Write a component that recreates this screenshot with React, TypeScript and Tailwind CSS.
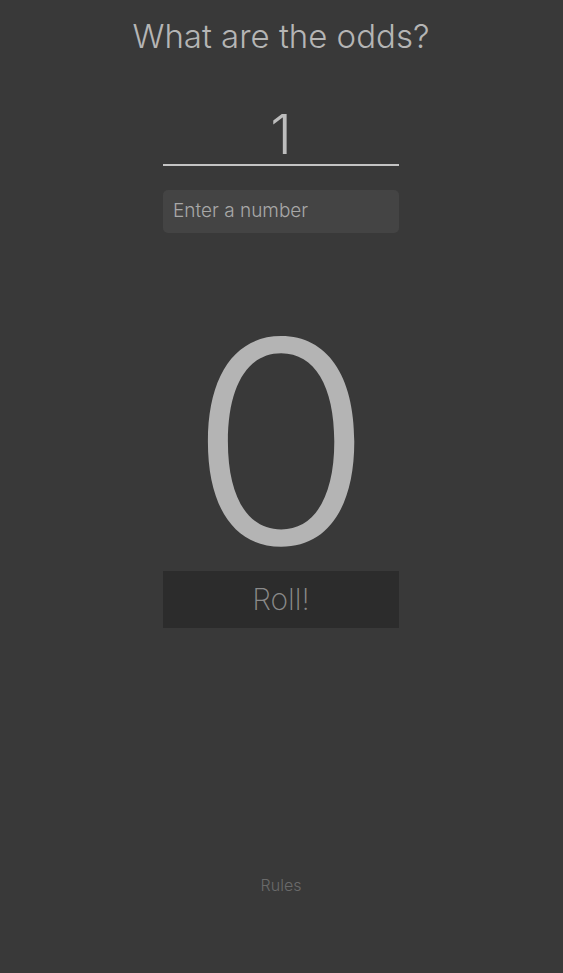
import React from "react";

export default function App() {
  return (
    <div
      className="w-[563px] h-[973px] bg-[#393939] flex flex-col items-center overflow-hidden pr-[1px]"
      style={{ fontFamily: "'Helvetica Neue', Inter, Roboto, 'Liberation Sans', sans-serif" }}
    >
      <h1 className="mt-[14px] text-[33px] leading-[44px] font-light text-[#b5b5b5]">
        What are the odds?
      </h1>
      <div className="mt-[46px] w-[236px] flex flex-col items-center">
        <div className="text-[55px] leading-[60px] font-light text-[#bdbdbd]">1</div>
        <div className="w-full h-[2px] bg-[#c4c4c4]" />
      </div>
      <div className="mt-[24px] w-[236px] h-[43px] rounded-[5px] bg-[#444444] flex items-center px-[10px]">
        <span className="text-[19px] font-light text-[#a8a8a8]">Enter a number</span>
      </div>
      <div className="mt-[80px] h-[258px] pt-[14px] flex items-start justify-center">
        <span className="block text-[282px] leading-[230px] font-light scale-x-[1.06] text-[#b4b4b4]">0</span>
      </div>
      <div className="w-[236px] h-[57px] bg-[#2c2c2c] flex items-center justify-center">
        <span className="text-[30px] font-extralight text-[#8a8a8a]">Roll!</span>
      </div>
      <div className="mt-[245px] text-[16px] font-light text-[#6a6a6a]">Rules</div>
    </div>
  );
}
